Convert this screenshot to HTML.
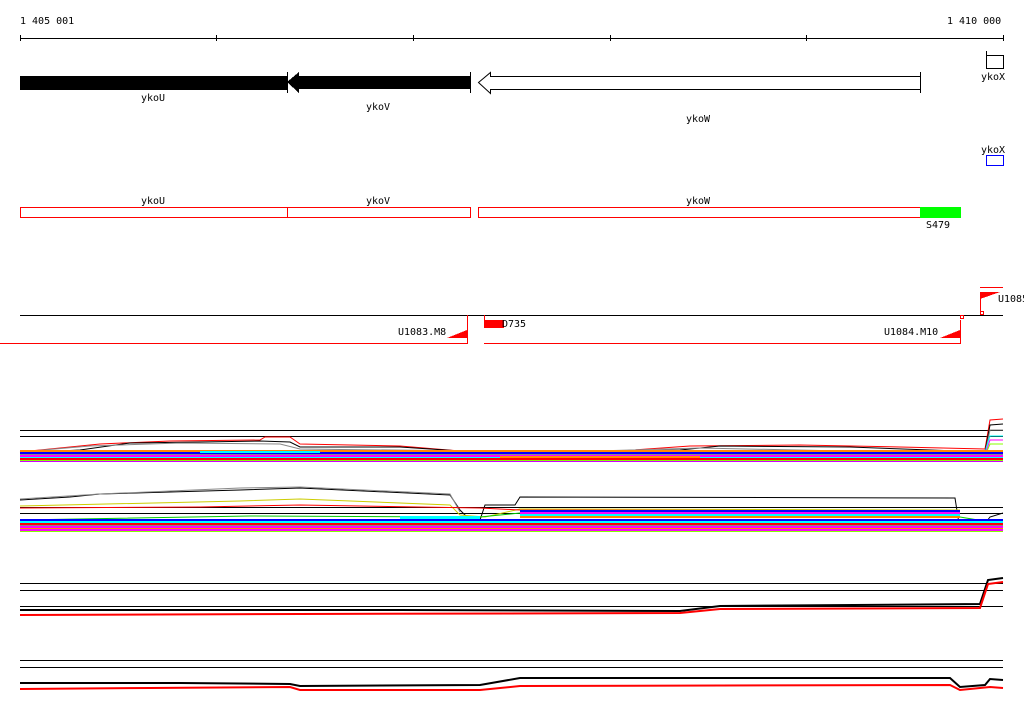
<!DOCTYPE html>
<html><head><meta charset="utf-8"><style>
html,body{margin:0;padding:0;background:#fff;width:1024px;height:714px;overflow:hidden}
text{font-family:"DejaVu Sans Mono","Liberation Mono",monospace;font-size:10px;fill:#000}
</style></head><body>
<svg width="1024" height="714" viewBox="0 0 1024 714" xmlns="http://www.w3.org/2000/svg" shape-rendering="crispEdges">
<text x="20" y="24">1 405 001</text>
<text x="947" y="24">1 410 000</text>
<g stroke="#000" stroke-width="1">
<line x1="20" y1="38.5" x2="1003" y2="38.5"/>
<line x1="20.5" y1="35" x2="20.5" y2="41"/><line x1="216.5" y1="35" x2="216.5" y2="41"/>
<line x1="413.5" y1="35" x2="413.5" y2="41"/><line x1="610.5" y1="35" x2="610.5" y2="41"/>
<line x1="806.5" y1="35" x2="806.5" y2="41"/><line x1="1003.5" y1="35" x2="1003.5" y2="41"/>
</g>
<rect x="20" y="76" width="267" height="14" fill="#000"/>
<polygon points="287,82 299,72 299,76 470,76 470,89 299,89 299,93" fill="#000"/>
<line x1="287.5" y1="72" x2="287.5" y2="93" stroke="#000"/>
<line x1="470.5" y1="72" x2="470.5" y2="93" stroke="#000"/>
<polygon points="478.5,82.5 490.5,72.5 490.5,76.5 920.5,76.5 920.5,89.5 490.5,89.5 490.5,93.5" fill="#fff" stroke="#000" shape-rendering="auto"/>
<line x1="920.5" y1="72" x2="920.5" y2="93" stroke="#000"/>
<text x="141" y="101">ykoU</text>
<text x="366" y="110">ykoV</text>
<text x="686" y="122">ykoW</text>
<rect x="986.5" y="55.5" width="17" height="13" fill="none" stroke="#000"/>
<line x1="986.5" y1="51" x2="986.5" y2="69" stroke="#000"/>
<text x="981" y="80">ykoX</text>
<text x="981" y="153">ykoX</text>
<rect x="986.5" y="155.5" width="17" height="10" fill="none" stroke="#00f"/>
<text x="141" y="204">ykoU</text><text x="366" y="204">ykoV</text><text x="686" y="204">ykoW</text>
<g fill="none" stroke="#f00">
<rect x="20.5" y="207.5" width="267" height="10"/>
<rect x="287.5" y="207.5" width="183" height="10"/>
<rect x="478.5" y="207.5" width="442" height="10"/>
</g>
<rect x="920" y="207" width="41" height="11" fill="#0f0"/>
<text x="926" y="228">S479</text>
<line x1="20" y1="315.5" x2="1003" y2="315.5" stroke="#000"/>
<g stroke="#f00">
<line x1="0" y1="343.5" x2="468" y2="343.5"/>
<line x1="484" y1="343.5" x2="961" y2="343.5"/>
<line x1="467.5" y1="315" x2="467.5" y2="343"/>
<line x1="484.5" y1="315" x2="484.5" y2="328"/>
<line x1="960.5" y1="320" x2="960.5" y2="343"/>
<line x1="980" y1="287.5" x2="1003" y2="287.5"/>
<line x1="980.5" y1="292" x2="980.5" y2="315"/>
</g>
<polygon points="447,338 467,338 467,330" fill="#f00"/>
<polygon points="940,338 960,338 960,330" fill="#f00"/>
<polygon points="980,292 1000,292 980,299" fill="#f00"/>
<rect x="484" y="320" width="20" height="8" fill="#f00"/>
<rect x="960.5" y="315.5" width="3" height="3" fill="#fff" stroke="#f00"/>
<rect x="980.5" y="311.5" width="3" height="3" fill="#fff" stroke="#f00"/>
<text x="398" y="335">U1083.M8</text>
<text x="502" y="327">D735</text>
<text x="884" y="335">U1084.M10</text>
<text x="998" y="302">U1085</text>
<!-- track 1 -->
<g stroke="#000"><line x1="20" y1="430.5" x2="1003" y2="430.5"/><line x1="20" y1="436.5" x2="1003" y2="436.5"/></g>
<g fill="none" shape-rendering="auto">
<polyline points="20,452 60,448 100,444 170,441 260,440 265,437 290,437 300,444 400,446 460,451 560,452 620,451 690,446 800,445 900,447 985,449 990,420 1003,419" stroke="#f00"/>
<polyline points="20,453 80,450 130,443 200,442 260,441 290,442 300,447 400,447 460,451 560,452 680,450 720,446 850,447 985,452 990,425 1003,424" stroke="#000"/>
<polyline points="20,452 90,446 180,443 280,444 300,449 560,452 700,448 985,454 990,430 1003,430" stroke="#888"/>
<polyline points="985,452 990,436 1003,436" stroke="#0ff"/>
<polyline points="985,455 990,440 1003,440" stroke="#f0f"/>
<polyline points="985,456 990,444 1003,444" stroke="#8f0"/>
</g>
<g>
<rect x="20" y="450" width="983" height="2" fill="#f80"/>
<rect x="20" y="452" width="983" height="2" fill="#00f"/>
<rect x="20" y="454" width="983" height="1" fill="#888"/>
<rect x="20" y="455" width="983" height="2" fill="#f0f"/>
<rect x="20" y="457" width="983" height="1" fill="#0ff"/>
<rect x="20" y="458" width="983" height="2" fill="#f00"/>
<rect x="20" y="460" width="983" height="1" fill="#8f0"/>
<rect x="20" y="461" width="983" height="1" fill="#c0f"/>
<rect x="200" y="451" width="120" height="2" fill="#0ff"/><rect x="500" y="456" width="200" height="2" fill="#f80"/>
</g>
<!-- track 2 -->
<g stroke="#000"><line x1="20" y1="507.5" x2="1003" y2="507.5"/><line x1="20" y1="513.5" x2="1003" y2="513.5"/></g>
<g fill="none" shape-rendering="auto">
<polyline points="20,500 70,497 100,494 240,490 300,488 450,495 460,510 470,520 480,520 485,505 515,505 520,497 955,498 960,530 980,530 990,517 1003,513" stroke="#000"/>
<polyline points="20,499 100,494 240,488 300,487 450,494 460,512" stroke="#888"/>
<polyline points="20,506 240,501 300,499 450,505 460,515 485,517 520,509 960,510" stroke="#cc0"/>
<polyline points="20,508 200,507 300,505 480,508 520,510 960,511" stroke="#f00"/>
<polyline points="20,520 250,516 480,517 520,513 960,517 990,522" stroke="#0c0"/>
</g>
<g>
<rect x="20" y="519" width="983" height="2" fill="#00f"/>
<rect x="20" y="521" width="983" height="2" fill="#0ff"/>
<rect x="20" y="523" width="983" height="2" fill="#f00"/>
<rect x="20" y="525" width="983" height="1" fill="#888"/>
<rect x="20" y="526" width="983" height="2" fill="#f0f"/>
<rect x="20" y="528" width="983" height="1" fill="#f80"/>
<rect x="20" y="529" width="983" height="2" fill="#f0f"/>
<rect x="20" y="531" width="983" height="1" fill="#8f0"/>
<rect x="520" y="510" width="440" height="2" fill="#00f"/>
<rect x="520" y="512" width="440" height="2" fill="#f0f"/>
<rect x="520" y="514" width="440" height="2" fill="#0ff"/>
<rect x="520" y="516" width="440" height="2" fill="#f80"/>
<rect x="400" y="516" width="80" height="3" fill="#0ff"/>
</g>
<!-- track 3 -->
<g stroke="#000"><line x1="20" y1="583.5" x2="1003" y2="583.5"/><line x1="20" y1="590.5" x2="1003" y2="590.5"/><line x1="20" y1="606.5" x2="1003" y2="606.5"/></g>
<polyline points="20,610 400,610 680,611 720,606 980,604 988,580 1003,578" fill="none" stroke="#000" stroke-width="2" shape-rendering="auto"/>
<polyline points="20,615 300,614 680,613 720,609 980,608 988,584 1003,582" fill="none" stroke="#f00" stroke-width="2" shape-rendering="auto"/>
<!-- track 4 -->
<g stroke="#000"><line x1="20" y1="660.5" x2="1003" y2="660.5"/><line x1="20" y1="667.5" x2="1003" y2="667.5"/></g>
<polyline points="20,683 180,683 290,684 300,686 480,685 520,678 950,678 960,687 985,685 990,679 1003,680" fill="none" stroke="#000" stroke-width="2" shape-rendering="auto"/>
<polyline points="20,689 150,688 290,687 300,690 480,690 520,686 950,685 960,690 990,687 1003,688" fill="none" stroke="#f00" stroke-width="2" shape-rendering="auto"/>
</svg>
</body></html>
